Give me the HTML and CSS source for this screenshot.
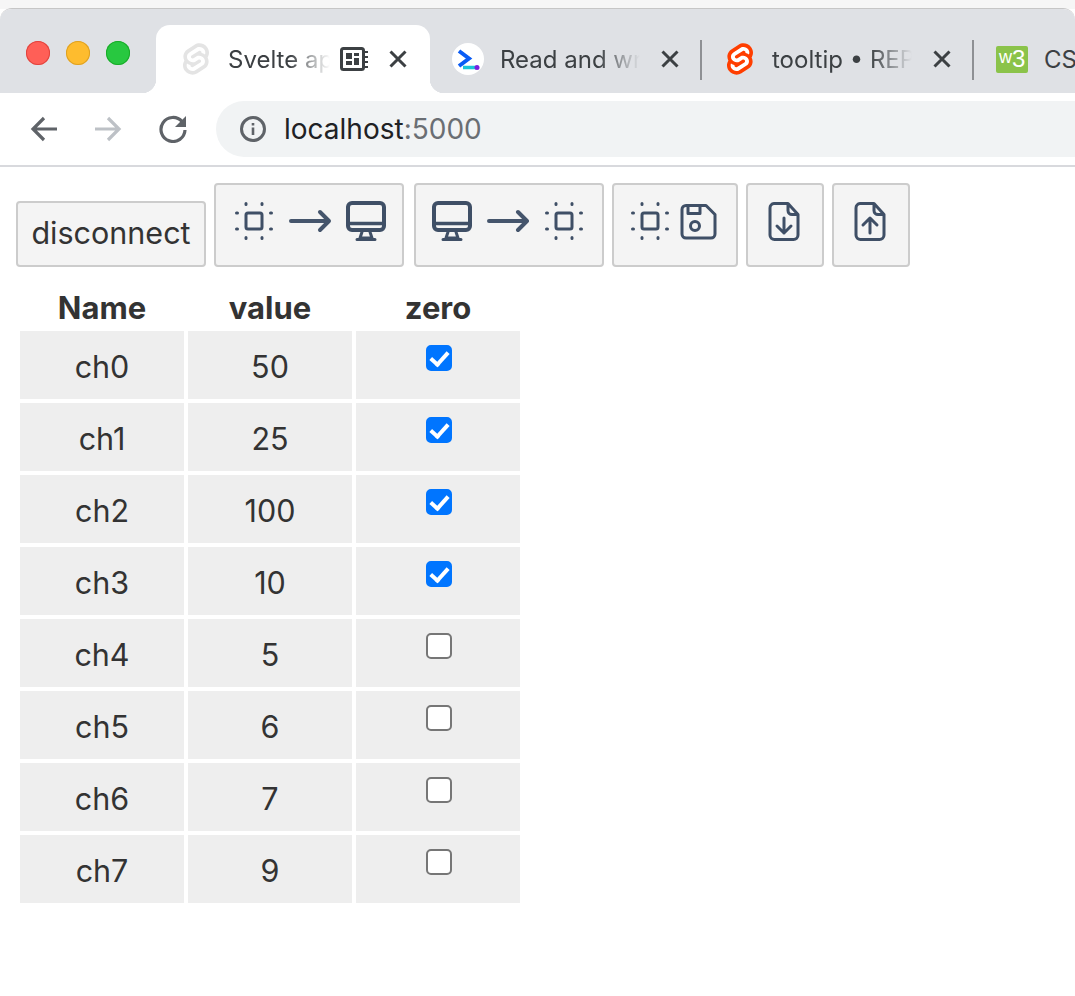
FILE: index.html
```html
<!DOCTYPE html>
<html lang="en">
  <head>
    <meta charset="UTF-8" />
    <title>Svelte app</title>
    <link rel="stylesheet" href="styles.css">
  </head>
  <body>
    <svg class="sprites" width="0" height="0">
      <defs>
        <symbol id="chip" viewBox="0 0 44 44">
          <g fill="none" stroke="#3f4f66" stroke-width="3" stroke-linecap="round">
            <rect x="14" y="14" width="16" height="16" rx="2" />
            <path d="M14 4.500v1M30 4.500v1M14 38.500v1M30 38.500v1M4.500 14h1M4.500 30h1M38.500 14h1M38.500 30h1" />
          </g>
        </symbol>
        <symbol id="monitor" viewBox="0 0 44 44">
          <g fill="none" stroke="#3f4f66" stroke-linecap="round" stroke-linejoin="round">
            <rect x="4" y="4" width="36" height="27" rx="4" stroke-width="4" />
            <path d="M4 24.500h36" stroke-width="3.500" />
            <path d="M18 33l-2 6h12l-2-6M13 40.500h18" stroke-width="3" />
          </g>
        </symbol>
        <symbol id="arrow" viewBox="0 0 44 44">
          <path d="M3 23h37M32 14l9 9-9 9" fill="none" stroke="#45556c" stroke-width="4" stroke-linecap="round" stroke-linejoin="round" />
        </symbol>
        <symbol id="file" viewBox="0 0 44 44">
          <path d="M12 5.500h14l10 11V37a4.500 4.500 0 0 1-4.500 4.500h-19A4.500 4.500 0 0 1 8 37V10a4.500 4.500 0 0 1 4-4.500zM26 5.500v7a4 4 0 0 0 4 4h6" fill="none" stroke="#3f4f66" stroke-width="3" stroke-linejoin="round" />
        </symbol>
        <symbol id="svelte" viewBox="0 0 98.100 118">
          <path d="M91.800 15.600C80.900-.1 59.200-4.700 43.600 5.200L16.100 22.800C8.600 27.500 3.400 35.200 1.900 43.900c-1.300 7.300-.2 14.800 3.300 21.300-2.400 3.600-4 7.600-4.700 11.800-1.600 8.900.5 18.100 5.700 25.400 11 15.700 32.600 20.300 48.200 10.400l27.500-17.500c7.500-4.700 12.700-12.400 14.200-21.100 1.300-7.300.2-14.800-3.300-21.300 2.400-3.600 4-7.600 4.700-11.800 1.700-9-.4-18.200-5.700-25.500" fill="currentColor" />
          <path d="M40.900 103.900c-8.900 2.300-18.200-1.200-23.400-8.700-3.200-4.400-4.400-9.900-3.500-15.300.2-.9.400-1.700.6-2.600l.5-1.600 1.400 1c3.300 2.400 6.900 4.200 10.800 5.400l1 .3-.1 1c-.1 1.400.3 2.900 1.100 4.100 1.600 2.300 4.400 3.400 7.100 2.700.6-.2 1.200-.4 1.700-.7L65.500 72c1.400-.9 2.300-2.200 2.600-3.800.3-1.600-.1-3.300-1-4.600-1.600-2.300-4.400-3.300-7.100-2.600-.6.200-1.200.4-1.700.7l-10.500 6.700c-1.700 1.100-3.600 1.900-5.600 2.400-8.900 2.300-18.200-1.200-23.400-8.700-3.100-4.400-4.400-9.900-3.400-15.300.9-5.200 4.100-9.900 8.600-12.700l27.500-17.500c1.700-1.100 3.600-1.900 5.600-2.500 8.900-2.300 18.200 1.200 23.400 8.700 3.200 4.400 4.400 9.900 3.500 15.300-.2.900-.4 1.700-.7 2.600l-.5 1.600-1.400-1c-3.300-2.400-6.900-4.200-10.800-5.400l-1-.3.1-1c.1-1.400-.3-2.900-1.100-4.100-1.600-2.300-4.400-3.300-7.100-2.600-.6.200-1.200.4-1.700.7L32.400 46.100c-1.400.9-2.300 2.200-2.600 3.800s.1 3.300 1 4.600c1.600 2.300 4.400 3.300 7.100 2.600.6-.2 1.200-.4 1.700-.7l10.500-6.700c1.700-1.100 3.600-1.900 5.600-2.500 8.900-2.300 18.200 1.200 23.400 8.700 3.200 4.400 4.400 9.900 3.500 15.300-.9 5.200-4.100 9.900-8.600 12.700l-27.500 17.500c-1.700 1.100-3.600 1.900-5.600 2.500" fill="#fff" />
        </symbol>
        <symbol id="close" viewBox="0 0 26 26">
          <path d="M5.500 5.500l15 15M20.500 5.500l-15 15" fill="none" stroke="#3c4043" stroke-width="3" />
        </symbol>
      </defs>
    </svg>

    <div class="desk-edge"></div>
    <header class="browser">
      <!-- tabs -->
      <div class="tabstrip">
        <div class="lights">
          <span class="light red"></span>
          <span class="light amber"></span>
          <span class="light green"></span>
        </div>
        <div class="tab active">
          <svg class="favicon svelte-faded" width="26" height="32"><use href="#svelte" /></svg>
          <span class="tab-title">Svelte app</span>
          <svg class="audio-icon" width="28" height="24" viewBox="0 0 28 24">
            <rect x="1.500" y="1.500" width="22" height="21" rx="2" fill="none" stroke="#3c4043" stroke-width="3" />
            <path d="M6 6h6v6H6zM14 6h5v3h-5zM14 11h5v7h-5zM6 14h6v4H6z" fill="#3c4043" />
            <path d="M25 5h3M25 10h3M25 15h3M25 20h3" stroke="#3c4043" stroke-width="2" />
          </svg>
          <svg class="tab-close" width="26" height="26"><use href="#close" /></svg>
        </div>
        <div class="tab tab-second">
          <svg class="favicon" width="32" height="32" viewBox="0 0 32 32">
            <circle cx="16" cy="16" r="16" fill="#fff" />
            <path d="M7 8l10 7.500L7 23" fill="none" stroke="#0a5cf5" stroke-width="4" />
            <path d="M11 24.500h13" stroke="#1cc6d8" stroke-width="3.500" />
            <circle cx="25" cy="24.500" r="2.500" fill="#7a1fe0" />
          </svg>
          <span class="tab-title">Read and write</span>
          <svg class="tab-close" width="26" height="26"><use href="#close" /></svg>
        </div>
        <div class="tab tab-third">
          <svg class="favicon svelte-red" width="26" height="32"><use href="#svelte" /></svg>
          <span class="tab-title">tooltip • REPL</span>
          <svg class="tab-close" width="26" height="26"><use href="#close" /></svg>
        </div>
        <div class="tab tab-fourth">
          <svg class="favicon" width="32" height="27" viewBox="0 0 32 27">
            <rect width="32" height="27" rx="2" fill="#8bc34a" />
            <text x="3" y="17" class="w3-w">w</text>
            <text x="16" y="21" class="w3-three">3</text>
          </svg>
          <span class="tab-title">CSS</span>
        </div>
      </div>
      <!-- address bar -->
      <div class="toolbar">
        <svg class="nav-icon" width="28" height="28" viewBox="0 0 28 28">
          <path d="M27 14H3M14 3L3 14l11 11" fill="none" stroke="#5f6368" stroke-width="3.200" />
        </svg>
        <svg class="nav-icon" width="28" height="28" viewBox="0 0 28 28">
          <path d="M1 14h24M14 3l11 11-11 11" fill="none" stroke="#bdc1c6" stroke-width="3.200" />
        </svg>
        <svg class="nav-icon" width="28" height="28" viewBox="0 0 28 28">
          <path d="M23 6.500A12 12 0 1 0 26 15" fill="none" stroke="#5f6368" stroke-width="3.200" />
          <path d="M27 1v11H16z" fill="#5f6368" />
        </svg>
        <div class="omnibox">
          <svg width="26" height="26" viewBox="0 0 26 26">
            <circle cx="13" cy="13" r="11.500" fill="none" stroke="#5f6368" stroke-width="3" />
            <path d="M11.700 11.500h2.600V19h-2.600zM11.700 7h2.600v2.600h-2.600z" fill="#5f6368" />
          </svg>
          <span class="url">localhost<span class="url-port">:5000</span></span>
        </div>
      </div>
    </header>

    <main class="page">
      <div class="actions">
        <button class="btn btn-text" type="button">disconnect</button>
        <button class="btn" type="button">
          <svg class="btn-icon" width="158" height="44">
            <use href="#chip" x="2" y="1" width="44" height="44" />
            <use href="#arrow" x="58" y="0" width="44" height="44" />
            <use href="#monitor" x="114" y="1" width="44" height="44" />
          </svg>
        </button>
        <button class="btn btn-push" type="button">
          <svg class="btn-icon" width="158" height="44">
            <use href="#monitor" x="0" y="1" width="44" height="44" />
            <use href="#arrow" x="56" y="0" width="44" height="44" />
            <use href="#chip" x="112" y="1" width="44" height="44" />
          </svg>
        </button>
        <button class="btn" type="button">
          <svg class="btn-icon" width="94" height="44">
            <use href="#chip" x="0" y="1" width="44" height="44" />
            <g fill="none" stroke="#3f4f66" stroke-width="3" stroke-linejoin="round">
              <path d="M58 7.500h20l9 9V36a4 4 0 0 1-4 4H58a4 4 0 0 1-4-4V11.500a4 4 0 0 1 4-4z" />
              <path d="M60 7.500v8h12v-8" />
              <circle cx="67" cy="28" r="4.500" />
            </g>
          </svg>
        </button>
        <button class="btn" type="button">
          <svg class="btn-icon" width="46" height="44">
            <use href="#file" x="0" y="0" width="44" height="44" />
            <path d="M22 20v15M15 28l7 7 7-7" fill="none" stroke="#3f4f66" stroke-width="3" stroke-linecap="round" stroke-linejoin="round" />
          </svg>
        </button>
        <button class="btn" type="button">
          <svg class="btn-icon" width="46" height="44">
            <use href="#file" x="0" y="0" width="44" height="44" />
            <path d="M22 35V20M15 27l7-7 7 7" fill="none" stroke="#3f4f66" stroke-width="3" stroke-linecap="round" stroke-linejoin="round" />
          </svg>
        </button>
      </div>

      <table class="channels">
        <thead>
          <tr><th>Name</th><th>value</th><th>zero</th></tr>
        </thead>
        <tbody>
          <tr><td>ch0</td><td>50</td><td class="zero"><input type="checkbox" checked /></td></tr>
          <tr><td>ch1</td><td>25</td><td class="zero"><input type="checkbox" checked /></td></tr>
          <tr><td>ch2</td><td>100</td><td class="zero"><input type="checkbox" checked /></td></tr>
          <tr><td>ch3</td><td>10</td><td class="zero"><input type="checkbox" checked /></td></tr>
          <tr><td>ch4</td><td>5</td><td class="zero"><input type="checkbox" /></td></tr>
          <tr><td>ch5</td><td>6</td><td class="zero"><input type="checkbox" /></td></tr>
          <tr><td>ch6</td><td>7</td><td class="zero"><input type="checkbox" /></td></tr>
          <tr><td>ch7</td><td>9</td><td class="zero"><input type="checkbox" /></td></tr>
        </tbody>
      </table>
    </main>
  </body>
</html>
```
FILE: styles.css
```css
* {
  box-sizing: border-box;
}
html,
body {
  margin: 0;
  padding: 0;
  overflow: hidden;
}
body {
  height: 996px;
  font-family: Inter, "Liberation Sans", sans-serif;
  color: #333;
  background-color: #fff;
}
.sprites {
  position: absolute;
}

/* browser chrome */
.desk-edge {
  height: 9px;
  background-color: #f6f6f6;
}
.browser {
  margin-top: -1px;
  border-top: 1px solid #c6c6c6;
  border-radius: 12px 12px 0 0;
  overflow: hidden;
}
.tabstrip {
  display: flex;
  align-items: flex-end;
  height: 84px;
  background-color: #dfe1e5;
}
.lights {
  display: flex;
  flex: none;
  gap: 16px;
  align-self: flex-start;
  width: 156px;
  padding: 32px 0 0 26px;
}
.light {
  width: 24px;
  height: 24px;
  border-radius: 50%;
}
.red {
  background-color: #ff5f57;
  box-shadow: inset 0 0 0 1px #e0443e;
}
.amber {
  background-color: #febc2e;
  box-shadow: inset 0 0 0 1px #dea123;
}
.green {
  background-color: #28c840;
  box-shadow: inset 0 0 0 1px #1aab29;
}
.tab {
  position: relative;
  display: flex;
  flex: none;
  align-items: center;
  width: 272px;
  height: 68px;
  padding-left: 22px;
  font-size: 24px;
  color: #3c4043;
}
.tab.active {
  width: 274px;
  padding-left: 27px;
  border-radius: 14px 14px 0 0;
  background-color: #fff;
}
.tab.active::before,
.tab.active::after {
  content: "";
  position: absolute;
  bottom: 0;
  width: 14px;
  height: 14px;
}
.tab.active::before {
  left: -14px;
  background: radial-gradient(circle at 0 0, #dfe1e5 14px, #fff 14.5px);
}
.tab.active::after {
  right: -14px;
  background: radial-gradient(circle at 100% 0, #dfe1e5 14px, #fff 14.5px);
}
.tab-second::after,
.tab-third::after {
  content: "";
  position: absolute;
  right: 0;
  top: 15px;
  width: 2px;
  height: 40px;
  background-color: #8e9094;
}
.tab-third {
  padding-left: 25px;
}
.favicon {
  flex: none;
}
.svelte-faded {
  color: #e4e4e4;
}
.svelte-red {
  color: #ff3e00;
}
.w3-w {
  font-family: "Liberation Sans", sans-serif;
  font-size: 18px;
  fill: #fff;
}
.w3-three {
  font-family: "Liberation Sans", sans-serif;
  font-size: 24px;
  fill: #fff;
}
.tab-title {
  flex: none;
  width: 140px;
  margin-left: 16px;
  overflow: hidden;
  white-space: nowrap;
  -webkit-mask-image: linear-gradient(to right, #000 70%, transparent 100%);
  mask-image: linear-gradient(to right, #000 70%, transparent 100%);
}
.tab.active .tab-title {
  width: 102px;
  margin-left: 19px;
  -webkit-mask-image: linear-gradient(to right, #000 60%, transparent 100%);
  mask-image: linear-gradient(to right, #000 60%, transparent 100%);
}
.tab-third .tab-title {
  margin-left: 19px;
}
.tab-fourth .tab-title {
  width: auto;
  overflow: visible;
  -webkit-mask-image: none;
  mask-image: none;
}
.audio-icon {
  flex: none;
  margin-left: 10px;
}
.tab-close {
  flex: none;
  margin-left: 17px;
}
.toolbar {
  display: flex;
  align-items: center;
  gap: 36px;
  height: 74px;
  padding-left: 30px;
  border-bottom: 2px solid #d8d9dd;
  background-color: #fff;
}
.nav-icon {
  flex: none;
}
.nav-icon + .nav-icon + .nav-icon {
  margin-left: 1px;
  margin-right: -7px;
}
.omnibox {
  display: flex;
  align-items: center;
  flex: none;
  gap: 18px;
  width: 900px;
  height: 56px;
  padding-left: 24px;
  border-radius: 28px;
  background-color: #f1f3f4;
  font-size: 28px;
  color: #202124;
}
.url-port {
  color: #6a6e73;
}

/* page */
.page {
  padding: 16px 0 0 16px;
}
.actions {
  display: flex;
  align-items: flex-end;
  gap: 8px;
}
.btn {
  display: block;
  padding: 13px 14px 23px;
  border: 2px solid #ccc;
  border-radius: 4px;
  background-color: #f4f4f4;
  font-family: inherit;
  font-size: 30.500px;
  color: #333;
}
.btn-text {
  width: 190px;
  height: 66px;
  padding: 0 0 3px;
}
.btn-push {
  margin-left: 2px;
}
.btn-icon {
  display: block;
}
.channels {
  margin-top: 20px;
  border-spacing: 4px;
  font-size: 30.500px;
}
.channels th {
  width: 164px;
  height: 36px;
  padding: 0 0 3px;
  font-size: 31px;
  font-weight: 700;
  line-height: 33px;
}
.channels td {
  width: 164px;
  height: 68px;
  padding: 2px 0 0;
  background-color: #eee;
  text-align: center;
}
.channels td.zero {
  padding: 14px 0 0 2px;
  vertical-align: top;
}
.zero input {
  display: block;
  position: relative;
  width: 26px;
  height: 26px;
  margin: 0 auto;
  border: 2px solid #767676;
  border-radius: 5px;
  background-color: #fff;
  appearance: none;
  -webkit-appearance: none;
}
.zero input:checked {
  border-color: #0075ff;
  background-color: #0075ff;
}
.zero input:checked::after {
  content: "";
  position: absolute;
  left: 6px;
  top: 1px;
  width: 7px;
  height: 14px;
  border: solid #fff;
  border-width: 0 4px 4px 0;
  transform: rotate(42deg);
}
```
